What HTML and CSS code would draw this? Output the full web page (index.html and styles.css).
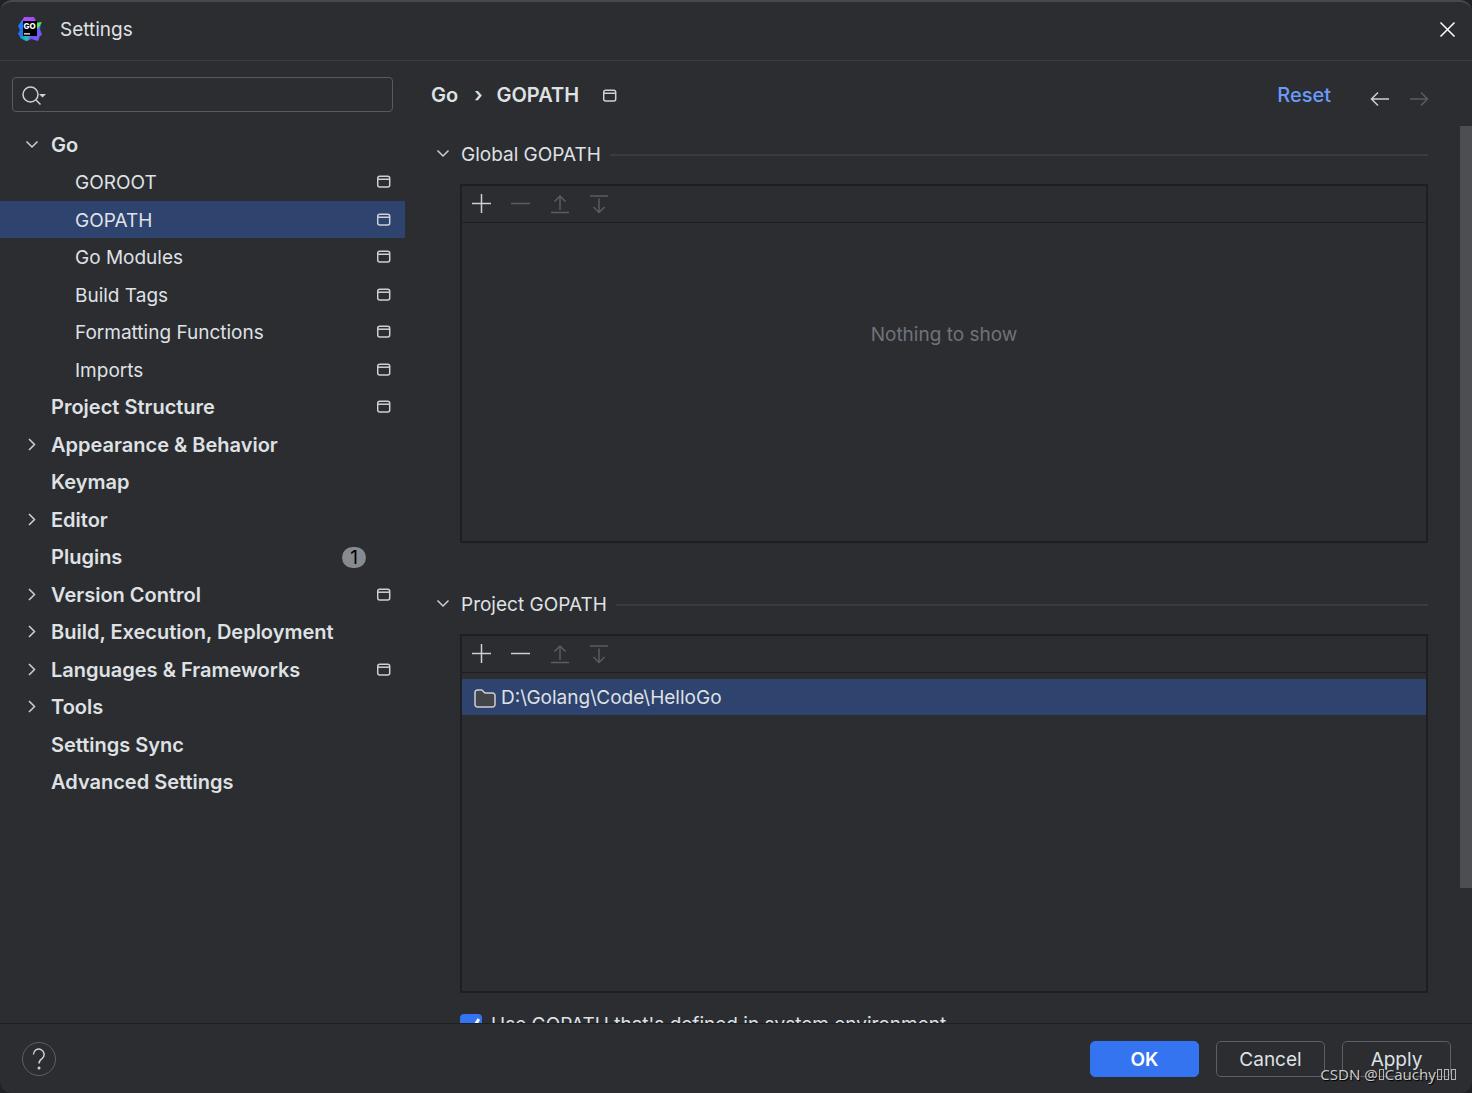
FILE: index.html
```html
<!DOCTYPE html>
<html lang="en">
<head>
<meta charset="utf-8">
<meta name="viewport" content="width=device-width, initial-scale=1">
<title>Settings</title>
<link rel="stylesheet" href="styles.css">
</head>
<body>
<svg class="defs" aria-hidden="true">
  <symbol id="window" viewBox="0 0 14 14"><rect x=".7" y="1.200" width="12" height="10.800" rx="2"/><path d="M.7 4.200h12"/></symbol>
  <symbol id="right" viewBox="0 0 14 14"><path d="M4 1l5.500 5.500L4 12"/></symbol>
  <symbol id="down" viewBox="0 0 14 14"><path d="M1.500 3.500 7 9l5.500-5.500"/></symbol>
  <symbol id="plus" viewBox="0 0 20 20"><path d="M9.500 0v19M0 9.500h19"/></symbol>
  <symbol id="minus" viewBox="0 0 20 20"><path d="M0 9.500h19"/></symbol>
  <symbol id="up-to" viewBox="0 0 20 20"><path d="M1 18.500h18M10 16V2M4.500 7.500 10 2l5.500 5.500"/></symbol>
  <symbol id="down-to" viewBox="0 0 20 20"><path d="M1 2h18M10 4.500v14M4.500 13l5.500 5.500 5.500-5.500"/></symbol>
</svg>
<div class="dialog">
  <header class="titlebar">
    <svg class="logo" viewBox="0 0 24 24" aria-label="GoLand" role="img">
      <defs>
        <linearGradient id="g1" x1="0" y1="0" x2="1" y2="1"><stop offset="0" stop-color="#0a8cf5"/><stop offset=".4" stop-color="#2a6df5"/><stop offset="1" stop-color="#9b4bfa"/></linearGradient>
        <linearGradient id="g2" x1="0" y1="1" x2="1" y2="0"><stop offset="0" stop-color="#5a6cf8"/><stop offset=".5" stop-color="#b74af7"/><stop offset="1" stop-color="#8a4cf7"/></linearGradient>
        <linearGradient id="g3" x1="0" y1="0" x2="1" y2="0"><stop offset="0" stop-color="#0a84f0"/><stop offset=".6" stop-color="#1ec8a0"/><stop offset="1" stop-color="#5a80f0"/></linearGradient>
      </defs>
      <path fill="url(#g1)" d="M4 3 0 9l2 4-2 4 3 4 6 3 4-2 7 2 2-5 2-1-2-6 1-6z"/>
      <path fill="url(#g2)" d="M3 6 6 0l10 0 2 4z"/>
      <path fill="url(#g3)" d="M2 19h10l-1 4-3 1-6-3z"/>
      <path fill="#4dee55" d="M18 6l6-1-3 5-2 2z"/>
      <path fill="#000" d="M5 4h14v15H5z"/>
      <path fill="#fff" d="M6 16.300h6v1.200H6z"/>
      <text x="5.600" y="11.500" class="logo-text">GO</text>
    </svg>
    <h1>Settings</h1>
    <button class="icon-button close" aria-label="Close"><svg viewBox="0 0 16 16"><path d="m.5 1.500 14 14M14.500 1.500l-14 14"/></svg></button>
  </header>

  <div class="content">
    <aside class="sidebar">
      <label class="search">
        <svg viewBox="0 0 26 20"><circle cx="8.500" cy="9.500" r="7.500"/><path d="m14 15 4.500 4.500"/><path class="fill" d="M17 9h7l-3.500 3.500z"/></svg>
        <input type="text" aria-label="Search settings">
      </label>
      <ul class="tree" role="tree">
        <li class="top" role="treeitem" aria-level="1" aria-expanded="true"><svg class="chevron"><use href="#down"/></svg><span>Go</span></li>
        <li class="child" role="treeitem" aria-level="2"><span>GOROOT</span><svg class="scope"><use href="#window"/></svg></li>
        <li class="child selected" role="treeitem" aria-level="2" aria-selected="true"><span>GOPATH</span><svg class="scope"><use href="#window"/></svg></li>
        <li class="child" role="treeitem" aria-level="2"><span>Go Modules</span><svg class="scope"><use href="#window"/></svg></li>
        <li class="child" role="treeitem" aria-level="2"><span>Build Tags</span><svg class="scope"><use href="#window"/></svg></li>
        <li class="child" role="treeitem" aria-level="2"><span>Formatting Functions</span><svg class="scope"><use href="#window"/></svg></li>
        <li class="child" role="treeitem" aria-level="2"><span>Imports</span><svg class="scope"><use href="#window"/></svg></li>
        <li class="top leaf" role="treeitem" aria-level="1"><span>Project Structure</span><svg class="scope"><use href="#window"/></svg></li>
        <li class="top" role="treeitem" aria-level="1" aria-expanded="false"><svg class="chevron"><use href="#right"/></svg><span>Appearance &amp; Behavior</span></li>
        <li class="top leaf" role="treeitem" aria-level="1"><span>Keymap</span></li>
        <li class="top" role="treeitem" aria-level="1" aria-expanded="false"><svg class="chevron"><use href="#right"/></svg><span>Editor</span></li>
        <li class="top leaf" role="treeitem" aria-level="1"><span>Plugins</span><b class="count">1</b></li>
        <li class="top" role="treeitem" aria-level="1" aria-expanded="false"><svg class="chevron"><use href="#right"/></svg><span>Version Control</span><svg class="scope"><use href="#window"/></svg></li>
        <li class="top" role="treeitem" aria-level="1" aria-expanded="false"><svg class="chevron"><use href="#right"/></svg><span>Build, Execution, Deployment</span></li>
        <li class="top" role="treeitem" aria-level="1" aria-expanded="false"><svg class="chevron"><use href="#right"/></svg><span>Languages &amp; Frameworks</span><svg class="scope"><use href="#window"/></svg></li>
        <li class="top" role="treeitem" aria-level="1" aria-expanded="false"><svg class="chevron"><use href="#right"/></svg><span>Tools</span></li>
        <li class="top leaf" role="treeitem" aria-level="1"><span>Settings Sync</span></li>
        <li class="top leaf" role="treeitem" aria-level="1"><span>Advanced Settings</span></li>
      </ul>
    </aside>

    <main class="page">
      <div class="page-head">
        <nav class="crumbs" aria-label="Breadcrumb"><span>Go</span><span class="sep">›</span><span>GOPATH</span><svg class="scope"><use href="#window"/></svg></nav>
        <a class="reset" href="#">Reset</a>
        <div class="history">
          <button class="icon-button" aria-label="Back"><svg viewBox="0 0 20 20"><path d="M19 10H1.500M8 3.500 1.500 10 8 16.500"/></svg></button>
          <button class="icon-button" aria-label="Forward" disabled><svg viewBox="0 0 20 20"><path d="M1 10h17.500M12 3.500l6.500 6.500-6.500 6.500"/></svg></button>
        </div>
      </div>
      <div class="viewport">
        <div class="form">
          <section class="group">
            <h2><svg class="chevron"><use href="#down"/></svg>Global GOPATH</h2>
            <div class="panel">
              <div class="toolbar">
                <button class="icon-button" aria-label="Add"><svg><use href="#plus"/></svg></button>
                <button class="icon-button" aria-label="Remove" disabled><svg><use href="#minus"/></svg></button>
                <button class="icon-button" aria-label="Move up" disabled><svg><use href="#up-to"/></svg></button>
                <button class="icon-button" aria-label="Move down" disabled><svg><use href="#down-to"/></svg></button>
              </div>
              <p class="empty">Nothing to show</p>
            </div>
          </section>
          <section class="group">
            <h2><svg class="chevron"><use href="#down"/></svg>Project GOPATH</h2>
            <div class="panel">
              <div class="toolbar">
                <button class="icon-button" aria-label="Add"><svg><use href="#plus"/></svg></button>
                <button class="icon-button" aria-label="Remove"><svg><use href="#minus"/></svg></button>
                <button class="icon-button" aria-label="Move up" disabled><svg><use href="#up-to"/></svg></button>
                <button class="icon-button" aria-label="Move down" disabled><svg><use href="#down-to"/></svg></button>
              </div>
              <ul class="paths">
                <li><svg class="folder" viewBox="0 0 22 20"><path d="M1 4.500A2.500 2.500 0 0 1 3.500 2h4.300l3.200 3h7.500A2.500 2.500 0 0 1 21 7.500v9a2.500 2.500 0 0 1-2.500 2.500h-15A2.500 2.500 0 0 1 1 16.500z"/></svg>D:\Golang\Code\HelloGo</li>
              </ul>
            </div>
          </section>
          <label class="option"><input type="checkbox" checked>Use GOPATH that's defined in system environment</label>
        </div>
        <div class="scrollbar"></div>
      </div>
    </main>
  </div>

  <footer class="footer">
    <button class="help" aria-label="Help"><svg viewBox="0 0 14 22"><path d="M1.500 6.500a5.300 5.300 0 1 1 8.500 4.100C8 12 7 12.800 7 15.500"/><circle class="fill" cx="7" cy="20" r="1.500"/></svg></button>
    <div class="actions">
      <button class="button primary">OK</button>
      <button class="button">Cancel</button>
      <button class="button">Apply</button>
    </div>
    <div class="watermark">CSDN @<i class="box"></i>Cauchy<i class="box"></i><i class="box"></i><i class="box"></i></div>
  </footer>
</div>
</body>
</html>
```
FILE: styles.css
```css
* { box-sizing: border-box; }

body {
  margin: 0;
  background: #202124;
  color: #dfe1e5;
  font: 400 19px/26px Inter, "Liberation Sans", sans-serif;
}

h1, h2, p, ul { margin: 0; padding: 0; font: inherit; list-style: none; }
svg { flex: none; fill: none; stroke: #ced0d6; stroke-width: 1.5; }
.fill { fill: #ced0d6; stroke: none; }
.defs { display: none; }

.dialog {
  display: flex;
  flex-direction: column;
  height: 100vh;
  overflow: hidden;
  background: #2b2d30;
  border-top: 2px solid #46484b;
  border-radius: 12px;
}

/* Title bar */
.titlebar {
  display: flex;
  align-items: center;
  height: 59px;
  padding: 0 16px 4px 18px;
  border-bottom: 1px solid #3a3c40;
}
.titlebar h1 { margin-left: 18px; padding-top: 2px; }
.logo { width: 24px; height: 24px; stroke: none; }
.logo-text { fill: #fff; font: 800 8px Inter, sans-serif; }

.icon-button {
  display: flex;
  align-items: center;
  justify-content: center;
  padding: 0;
  border: 0;
  background: none;
}
.icon-button svg { width: 20px; height: 20px; }
.icon-button:disabled svg { stroke: #5a5c5e; }
.close { margin-left: auto; }
.close svg { width: 16px; height: 16px; stroke: #fff; }

/* Sidebar */
.content { display: flex; flex: 1; min-height: 0; }
.sidebar { width: 405px; flex: none; padding-top: 16px; }
.search {
  display: flex;
  align-items: center;
  height: 35px;
  margin: 0 12px 14px;
  padding: 0 9px;
  border: 1px solid #585a5f;
  border-radius: 4px;
}
.search svg { width: 26px; height: 20px; }
.search input {
  flex: 1;
  min-width: 0;
  border: 0;
  outline: 0;
  background: none;
  color: inherit;
  font: inherit;
}
.tree li {
  display: flex;
  align-items: center;
  height: 38px;
  padding: 0 14px 0 25px;
}
.tree li:nth-child(odd) { height: 37px; }
.tree .child { padding-left: 75px; }
.tree .leaf { padding-left: 51px; }
.child span { padding-top: 2px; }
.top, .crumbs, .reset { font-size: 20px; font-weight: 600; }
.selected { background: #2e436e; }
.chevron { width: 14px; height: 14px; }
.top .chevron { margin-right: 12px; }
.scope { width: 14px; height: 14px; }
.tree .scope { margin-left: auto; }
.count {
  width: 24px;
  height: 21px;
  margin: 0 25px 0 auto;
  border-radius: 11px;
  background: #868a91;
  color: #000;
  font-size: 19px;
  font-weight: 400;
  line-height: 21px;
  text-align: center;
}

/* Page */
.page { display: flex; flex: 1; flex-direction: column; min-width: 0; }
.page-head {
  display: flex;
  align-items: center;
  height: 65px;
  padding: 2px 43px 0 26px;
}
.crumbs { display: flex; align-items: center; }
.sep { margin: 0 14px 0 16px; }
.crumbs .scope { margin: 2px 0 0 24px; }
.reset { margin-left: auto; color: #6b9bfa; font-weight: 500; text-decoration: none; }
.history { display: flex; gap: 19px; margin: 8px 0 0 39px; }

.viewport { display: flex; flex: 1; min-height: 0; overflow: hidden; }
.form { flex: 1; min-width: 0; padding: 16px 32px 0 31px; }
.scrollbar { width: 12px; height: 85%; background: #4d4e51; }
.group { margin-bottom: 49px; }
.group:nth-of-type(2) { margin-bottom: 19px; }
.group h2 { display: flex; align-items: center; }
.group h2 .chevron { margin: 0 11px 2px 0; }
.group h2::after {
  content: "";
  flex: 1;
  height: 2px;
  margin-left: 9px;
  background: #393b40;
}
.panel {
  height: 359px;
  margin: 16px 0 0 24px;
  border: 2px solid #1e1f22;
}
.toolbar { display: flex; height: 37px; border-bottom: 1px solid #1e1f22; }
.toolbar .icon-button { width: 39px; }
.empty { padding-top: 99px; color: #6f737a; text-align: center; }
.paths { padding-top: 6px; }
.paths li {
  display: flex;
  align-items: center;
  gap: 5px;
  height: 36px;
  padding: 2px 12px 0;
  background: #2e436e;
}
.folder { width: 22px; height: 20px; fill: #43454a; }

.option { display: flex; align-items: center; gap: 9px; margin-left: 24px; }
.option input {
  appearance: none;
  width: 22px;
  height: 22px;
  margin: 0;
  border-radius: 4px;
  background: #3574f0;
  display: grid;
  place-items: center;
}
.option input::after {
  content: "";
  width: 7px;
  height: 16px;
  border: solid #fff;
  border-width: 0 3px 3px 0;
  transform: rotate(30deg);
}

/* Footer */
.footer {
  position: relative;
  display: flex;
  align-items: center;
  justify-content: space-between;
  height: 70px;
  flex: none;
  padding: 0 21px 0 22px;
  border-top: 1px solid #1e1f22;
}
.help {
  display: grid;
  place-items: center;
  width: 34px;
  height: 34px;
  padding: 0;
  border: 1px solid #5c5f65;
  border-radius: 50%;
  background: none;
}
.help svg { width: 14px; height: 22px; }
.actions { display: flex; gap: 17px; }
.button {
  width: 109px;
  height: 36px;
  padding: 2px 0 0;
  border: 1px solid #5c5f65;
  border-radius: 5px;
  background: none;
  color: inherit;
  font: inherit;
}
.primary { border-color: #3574f0; background: #3574f0; color: #fff; font-weight: 600; }
.watermark {
  position: absolute;
  right: 15px;
  bottom: 9px;
  color: #c8c9ca;
  font: 15px/20px "Noto Sans", sans-serif;
  text-shadow: 1px 1px 1px #000;
}
.box {
  display: inline-block;
  width: 5px;
  height: 11px;
  margin: 0 1px;
  border: 1px solid #b4b5b6;
}
```
